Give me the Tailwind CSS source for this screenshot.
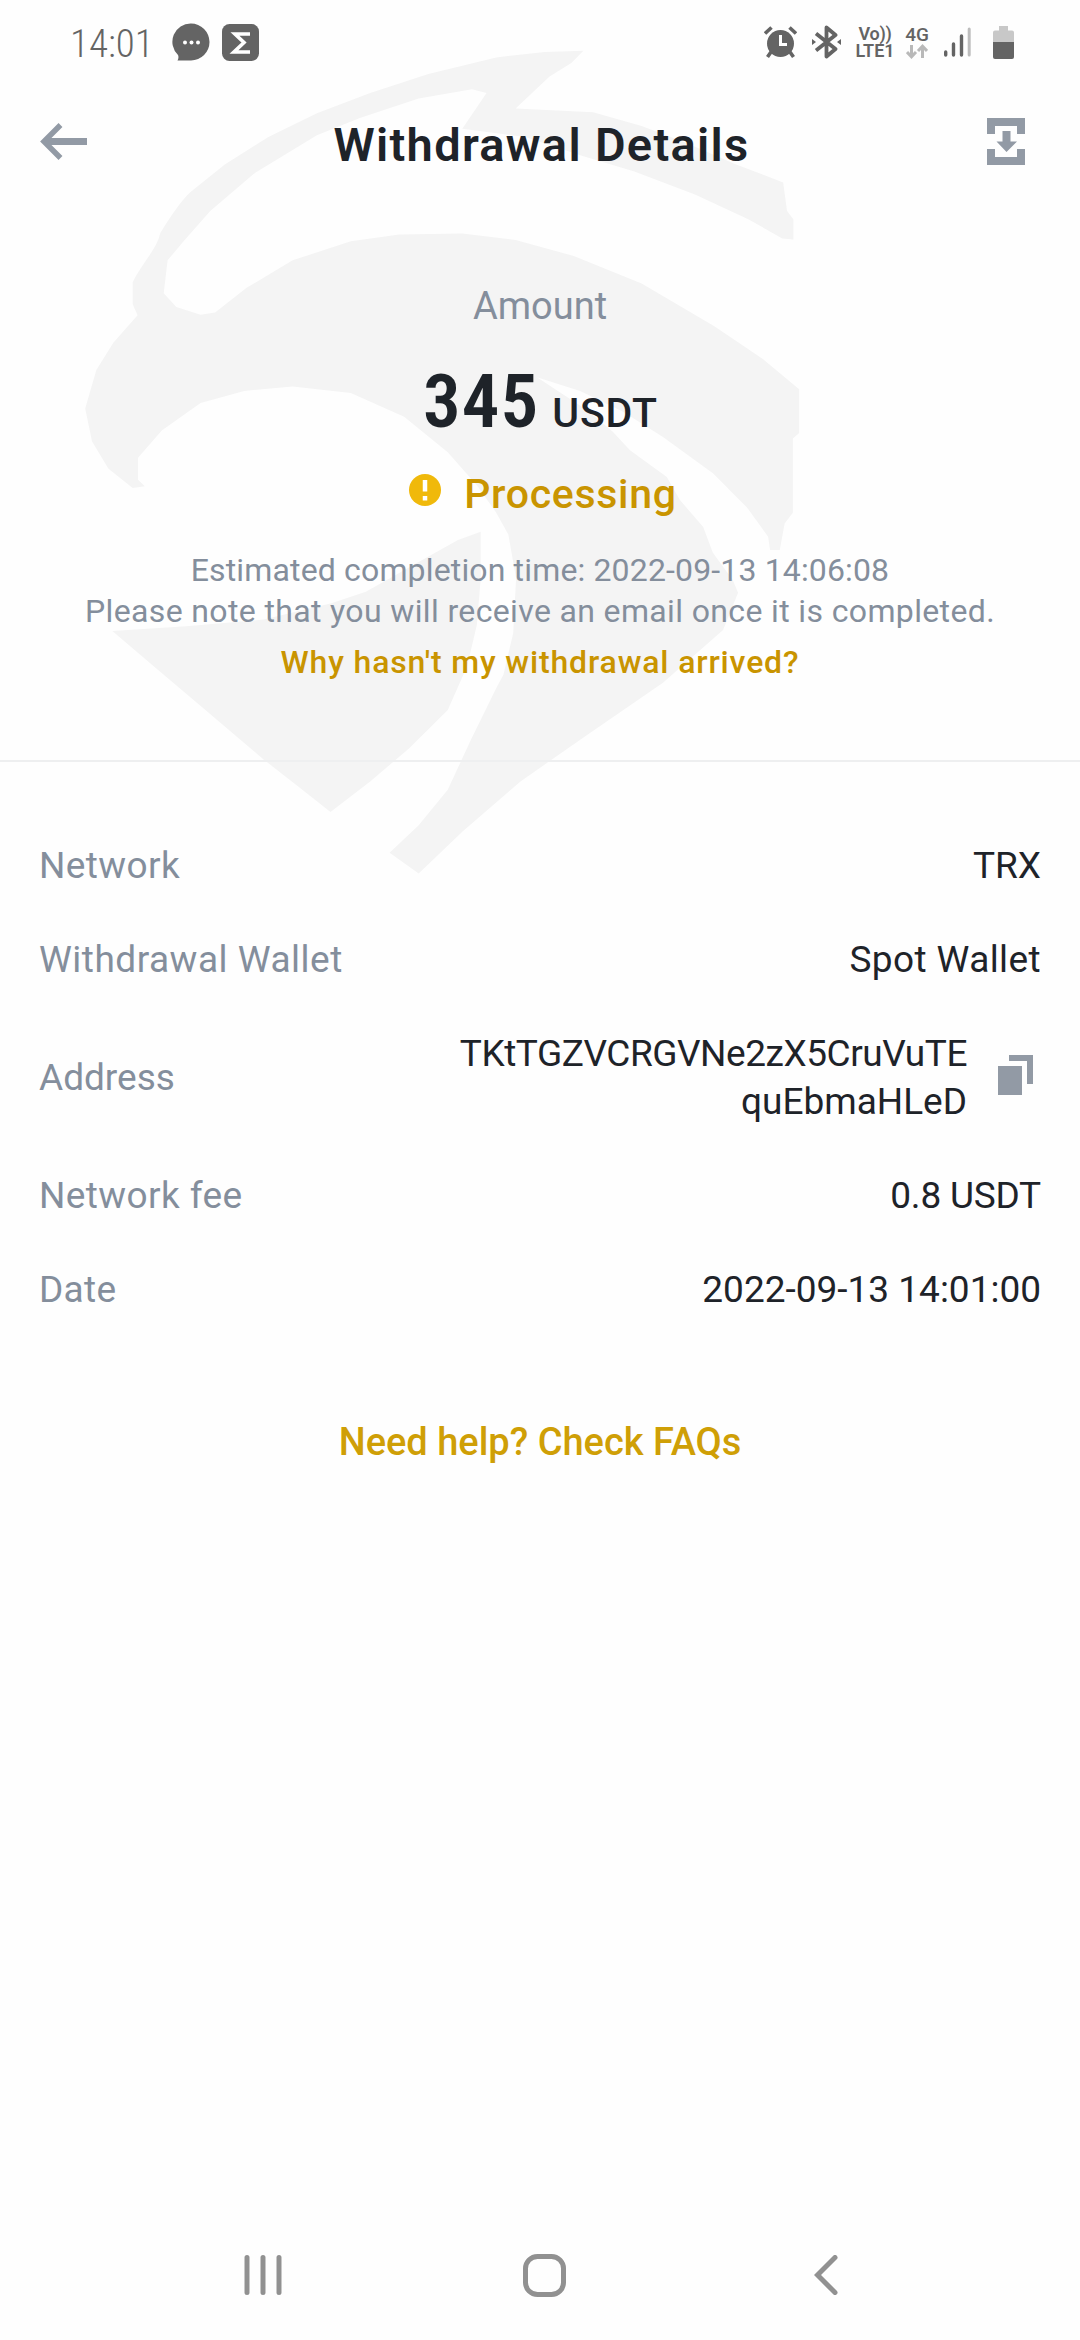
<!DOCTYPE html>
<html lang="en">
<head>
  <meta charset="UTF-8" />
  <meta name="viewport" content="width=device-width, initial-scale=1.0" />
  <title>Withdrawal Details</title>
  <script src="https://cdn.jsdelivr.net/npm/@tailwindcss/browser@4"></script>
</head>
<body class="bg-[#fefefe] font-['Roboto',sans-serif] text-[#1e2329]">
  <div class="relative flex h-[2340px] w-[1080px] flex-col overflow-hidden">

    <!-- Watermark -->
    <svg class="absolute left-[60px] top-[30px] h-[860px] w-[760px]" viewBox="0 0 1568 1568" preserveAspectRatio="none" fill="#f4f4f4" aria-hidden="true">
      <path d="M150 460C165 430 200 400 207 370C225 345 250 310 270 295L340 245L430 195L530 152L640 115L760 80L900 50L1000 40L1080 38L1055 60L1010 85L940 143L1100 150L1200 175L1290 205L1395 245L1492 278L1500 330L1513 345V382L1490 380L1420 345L1310 300L1185 258L1080 230L960 195L830 180L880 115L850 108L740 125L620 160L530 192L400 262L310 330L255 385L222 420L214 480L240 505L290 519L320 515L385 470L480 420L600 385L700 373L830 371L940 383L1060 412L1200 462L1350 540L1450 600L1525 655V735L1512 745V880L1495 900L1485 948H1465L1461 924L1417 870L1347 808L1244 742L1160 695L1073 658L984 633L1087 693L1141 733L1176 766L1252 815L1279 857L1327 906L1347 953L1388 1003L1399 1026L1368 1094L1244 1190L1080 1290L950 1370L830 1462L740 1538L680 1500L740 1450L800 1385L850 1290L900 1200L915 1175L935 1100L941 1000L925 920L900 880L860 830L800 770L710 705L600 662L480 650L380 658L290 680L210 730L161 780V820L175 832L150 835L100 800L66 750L52 690L75 620L110 570L160 520L150 500Z" />
      <path d="M868 915V1000L860 1085L840 1160L800 1240L720 1310L640 1370L558 1426L500 1385L420 1330L300 1240L200 1165L108 1096L260 1087L420 1075L560 1045L631 1024L740 970L821 930Z" />
    </svg>

    <!-- Status bar -->
    <div class="relative flex h-[84px] items-center pl-[70px] pr-[66px] text-[#646464]">
      <span class="w-[102px] pt-1 text-[39px] leading-none font-[350] font-stretch-75%">14:01</span>
      <svg class="h-[38px] w-[38px]" viewBox="0 0 38 38">
        <path d="M19 .5a18.3 18.3 0 1 1 0 37H5.500c1-2 1.300-3.600.5-5.500A18.300 18.300 0 0 1 19 .5Z" fill="#646464" />
        <circle cx="13" cy="19.500" r="2" fill="#fff" /><circle cx="19.500" cy="19.500" r="2" fill="#fff" /><circle cx="26" cy="19.500" r="2" fill="#fff" />
      </svg>
      <svg class="ml-3 h-[37px] w-[37px]" viewBox="0 0 37 37">
        <rect width="37" height="37" rx="7.500" fill="#646464" />
        <path d="M28 10H13l9 8.500L12 28h16" fill="none" stroke="#fff" stroke-width="3.600" />
      </svg>

      <div class="ml-auto flex items-center">
        <svg class="h-[33px] w-[33px]" viewBox="0 0 33 33" fill="none" stroke="#646464">
          <circle cx="16.500" cy="17.500" r="13.500" fill="#646464" stroke="none" />
          <path d="M1 7.500 7.500 1.500M32 7.500 25.500 1.500M7 26l-3.500 5M26 26l3.500 5" stroke-width="3.600" />
          <path d="M16.500 9v9.500H23" stroke="#fff" stroke-width="3" />
        </svg>
        <svg class="ml-[15px] h-[34px] w-[29px]" viewBox="0 0 29 34" fill="none" stroke="#646464" stroke-width="3.800" stroke-linejoin="round">
          <path d="M4 8.500 23.500 24 14.500 31.500V2.500L23.500 10 4 25.500" />
          <path d="M0 14v6l4-3ZM29 14v6l-4-3Z" fill="#646464" stroke="none" />
        </svg>
        <div class="ml-[15px] flex w-[38px] flex-col items-center text-[18px] leading-[17px] font-semibold whitespace-nowrap">
          <span class="tracking-[-0.3px]">Vo))</span>
          <span>LTE1</span>
        </div>
        <div class="ml-3 flex w-[22px] flex-col items-center">
          <span class="text-[19px] leading-[17px] font-medium">4G</span>
          <svg class="mt-px h-[15px] w-[22px]" viewBox="0 0 22 15" fill="none" stroke="#b9b9b9" stroke-width="3">
            <path d="M5.500 1v11M1 8l4.500 4.800L10 8M16.500 14V3M12 7l4.500-4.800L21 7" />
          </svg>
        </div>
        <svg class="ml-4 h-[32px] w-[27px]" viewBox="0 0 27 32" fill="none" stroke="#646464" stroke-width="3.400" stroke-linecap="round">
          <path d="M1.700 26v3M9.500 18v11M17.500 10v19" />
          <path d="M25.200 3v26" stroke="#bdbdbd" stroke-width="3" />
        </svg>
        <svg class="ml-[22px] h-[33px] w-[21px]" viewBox="0 0 21 33">
          <path d="M6 0h9v4.500h4a2 2 0 0 1 2 2V16H0V6.500a2 2 0 0 1 2-2h4Z" fill="#c8c8c8" />
          <path d="M0 16h21v15a2 2 0 0 1-2 2H2a2 2 0 0 1-2-2Z" fill="#646464" />
        </svg>
      </div>
    </div>

    <!-- Header -->
    <header class="relative flex h-[120px] items-center justify-between pl-10 pr-[55px]">
      <svg class="mb-[5px] h-[37px] w-[47px]" viewBox="0 0 47 37" fill="none" stroke="#929aa5">
        <path d="M20.500 2 4 18.500 20.500 35" stroke-width="5.500" />
        <path d="M5 18.500h42" stroke-width="7" />
      </svg>
      <h1 class="ml-[9px] pt-px text-[47px] leading-none font-[560] tracking-[1.3px]">Withdrawal Details</h1>
      <svg class="mb-[5px] h-[47px] w-[38px]" viewBox="0 0 38 47" fill="#929aa5">
        <path d="M0 0h38v16h-8V8H8v8H0ZM0 31h8v8h22v-8h8v16H0ZM15.500 13h8v10.500H30L19.500 34 9.500 23.500h6Z" />
      </svg>
    </header>

    <!-- Amount -->
    <section class="relative flex flex-col items-center border-b-2 border-[#eeeff0] pt-[72px] pb-[77px]">
      <p class="text-[38px] leading-[60px] font-[450] text-[#848e9c]">Amount</p>
      <p class="mt-[20px] flex h-[90px] items-baseline pl-px leading-[90px]">
        <span class="text-[75px] font-[650] tracking-[1px] font-stretch-semi-condensed">345</span>
        <span class="ml-[13px] text-[41px] font-[480] tracking-[0.8px]">USDT</span>
      </p>
      <div class="mt-[18px] flex h-[60px] items-center pl-[6px]">
        <svg class="mb-[8px] h-8 w-8" viewBox="0 0 32 32">
          <circle cx="16" cy="16" r="16" fill="#f0b90b" />
          <path d="M16 6v11.500M16 22v4.500" stroke="#fff" stroke-width="4.500" />
        </svg>
        <span class="ml-[23px] text-[41px] leading-[60px] font-[480] tracking-[0.7px] text-[#c99400]">Processing</span>
      </div>
      <p class="mt-[26px] text-[32px] leading-[41px] tracking-[0.15px] text-[#848e9c]">Estimated completion time: 2022-09-13 14:06:08</p>
      <p class="text-[32px] leading-[41px] tracking-[0.36px] text-[#848e9c]">Please note that you will receive an email once it is completed.</p>
      <a href="#" class="mt-[9px] text-[32px] leading-[42px] font-medium tracking-[0.85px] text-[#c99400]">Why hasn't my withdrawal arrived?</a>
    </section>

    <!-- Details -->
    <dl class="relative flex flex-col gap-[46px] px-[39px] pt-[80px] text-[37px] leading-[48px] font-[370]">
      <div class="flex items-center justify-between">
        <dt class="tracking-[0.4px] text-[#848e9c]">Network</dt>
        <dd>TRX</dd>
      </div>
      <div class="flex items-center justify-between">
        <dt class="tracking-[0.5px] text-[#848e9c]">Withdrawal Wallet</dt>
        <dd class="tracking-[0.4px]">Spot Wallet</dd>
      </div>
      <div class="flex items-center">
        <dt class="text-[#848e9c]">Address</dt>
        <dd class="ml-auto text-right"><span class="tracking-[-0.45px]">TKtTGZVCRGVNe2zX5CruVuTE</span><br />quEbmaHLeD</dd>
        <svg class="mb-[6px] ml-[31px] mr-2 h-10 w-[35px]" viewBox="0 0 35 40" fill="#929aa5">
          <path d="M0 11h24v29H0ZM11 0h24v29h-6V6H11Z" />
        </svg>
      </div>
      <div class="flex items-center justify-between">
        <dt class="tracking-[0.4px] text-[#848e9c]">Network fee</dt>
        <dd class="tracking-[-0.2px]">0.8 USDT</dd>
      </div>
      <div class="flex items-center justify-between">
        <dt class="tracking-[0.3px] text-[#848e9c]">Date</dt>
        <dd>2022-09-13 14:01:00</dd>
      </div>
    </dl>

    <a href="#" class="relative mt-[98px] text-center text-[38px] leading-[60px] font-[480] text-[#cf9f06]">Need help? Check FAQs</a>

    <!-- Navigation bar -->
    <nav class="mt-auto flex h-[130px] items-center pl-[244px]">
      <svg class="h-10 w-[38px]" viewBox="0 0 38 40" stroke="#919191" stroke-width="5" stroke-linecap="round">
        <path d="M3 2.500v35M19 2.500v35M35 2.500v35" />
      </svg>
      <svg class="ml-[241px] h-[43px] w-[43px]" viewBox="0 0 43 43" fill="none" stroke="#919191" stroke-width="5">
        <rect x="2.500" y="2.500" width="38" height="38" rx="12" />
      </svg>
      <svg class="ml-[248px] h-10 w-6" viewBox="0 0 24 40" fill="none" stroke="#919191" stroke-width="5" stroke-linecap="round">
        <path d="M21 2.500 3.500 20 21 37.500" />
      </svg>
    </nav>
  </div>
</body>
</html>
